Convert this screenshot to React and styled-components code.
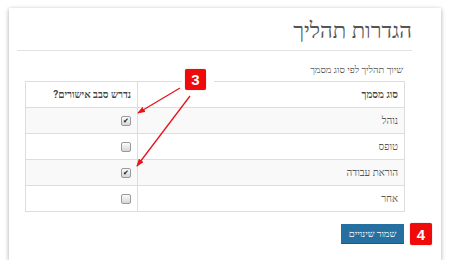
import React from "react";
import styled, { createGlobalStyle } from "styled-components";

const Global = createGlobalStyle`
  html, body { margin: 0; padding: 0; background: #fff; }
  body { font-family: Roboto, monospace; }
`;

const Card = styled.div`
  position: relative;
  direction: rtl;
  box-sizing: border-box;
  margin: 8px 0 0 9px;
  width: 432px;
  height: 252px;
  background: #fff;
  box-shadow: 0 1px 4px rgba(0, 0, 0, 0.28), 0 2px 6px rgba(0, 0, 0, 0.08);
`;

const Header = styled.div`
  margin: 0 29px 0 8px;
  padding: 10px 0 7px;
  border-bottom: 1px solid #e2e2e2;
`;

const Title = styled.h1`
  margin: 0;
  font-family: Roboto, monospace;
  font-size: 22px;
  line-height: 25px;
  font-weight: normal;
  color: #555;
`;

const Content = styled.div`
  padding: 11px 36px 0 16px;
`;

const Subtitle = styled.div`
  font-size: 9.5px;
  line-height: 16px;
  color: #555;
  padding-right: 2px;
  margin-bottom: 3px;
`;

const Table = styled.table`
  width: 100%;
  border-collapse: collapse;
  border: 1px solid #ddd;
  font-family: Roboto, monospace;
  font-size: 10px;
  color: #555;
`;

const Row = styled.tr`
  background: ${(p) => (p.$striped ? "#f9f9f9" : "#fff")};
`;

const Cell = styled.td`
  border: 1px solid #ddd;
  height: 25px;
  padding: 0 6px 0 6px;
  text-align: right;
  vertical-align: middle;
  width: ${(p) => p.$w || "auto"};
  font-weight: ${(p) => (p.$head ? "bold" : "normal")};
  color: ${(p) => (p.$head ? "#444" : "#555")};
`;

const Check = styled.span`
  display: inline-flex;
  align-items: center;
  justify-content: center;
  width: 8px;
  height: 8px;
  border: 1px solid #9a9a9a;
  border-radius: 2px;
  background: linear-gradient(#fbfbfb, #d6d6d6);
  font-family: "DejaVu Sans", sans-serif;
  font-size: 7px;
  line-height: 1;
  color: #111;
  vertical-align: middle;
`;

const Footer = styled.div`
  display: flex;
  align-items: center;
  gap: 6px;
  margin-top: 11px;
  margin-right: -27px;
`;

const Button = styled.button`
  width: 63px;
  height: 20px;
  border: none;
  background: #2570a1;
  color: #fff;
  font-family: Roboto, monospace;
  font-size: 9.5px;
  padding: 0;
  border-bottom: 1px solid #1c5a85;
`;

const Badge = styled.div`
  display: flex;
  align-items: center;
  justify-content: center;
  width: ${(p) => p.$size}px;
  height: ${(p) => p.$size}px;
  border-radius: 2px;
  background: #f00a0a;
  color: #fff;
  font-family: "Liberation Sans", Arial, sans-serif;
  font-weight: bold;
  font-size: 15px;
  box-shadow: 0 0 1px rgba(120, 0, 0, 0.6);
`;

const FloatBadge = styled.div`
  position: absolute;
  left: 173px;
  top: 59px;
  padding: 2px 8px 2px 3px;
  background: #fff;
`;

const Arrows = styled.svg`
  position: absolute;
  left: 0;
  top: 0;
  pointer-events: none;
`;

const rows = [
  { name: "נוהל", checked: true },
  { name: "טופס", checked: false },
  { name: "הוראת עבודה", checked: true },
  { name: "אחר", checked: false },
];

export default function App() {
  return (
    <>
      <Global />
      <Card>
        <Header>
          <Title>הגדרות תהליך</Title>
        </Header>
        <Content>
          <Subtitle>שיוך תהליך לפי סוג מסמך</Subtitle>
          <Table>
            <tbody>
              <Row>
                <Cell $head>סוג מסמך</Cell>
                <Cell $head $w="99px">נדרש סבב אישורים?</Cell>
              </Row>
              {rows.map((r, i) => (
                <Row key={r.name} $striped={i % 2 === 0}>
                  <Cell>{r.name}</Cell>
                  <Cell>
                    <Check>{r.checked ? "✔" : ""}</Check>
                  </Cell>
                </Row>
              ))}
            </tbody>
          </Table>
          <Footer>
            <Badge $size={22}>4</Badge>
            <Button>שמור שינויים</Button>
          </Footer>
        </Content>
        <FloatBadge>
          <Badge $size={21}>3</Badge>
        </FloatBadge>
        <Arrows width="432" height="252" viewBox="0 0 432 252">
          <defs>
            <marker id="ah" markerWidth="8" markerHeight="6" refX="7" refY="3" orient="auto" markerUnits="userSpaceOnUse">
              <path d="M0,0 L8,3 L0,6 Z" fill="#e8141a" />
            </marker>
          </defs>
          <line x1="171" y1="80" x2="129" y2="105" stroke="#e8141a" strokeWidth="1.3" markerEnd="url(#ah)" />
          <line x1="181" y1="88" x2="128" y2="158" stroke="#e8141a" strokeWidth="1.3" markerEnd="url(#ah)" />
        </Arrows>
      </Card>
    </>
  );
}
